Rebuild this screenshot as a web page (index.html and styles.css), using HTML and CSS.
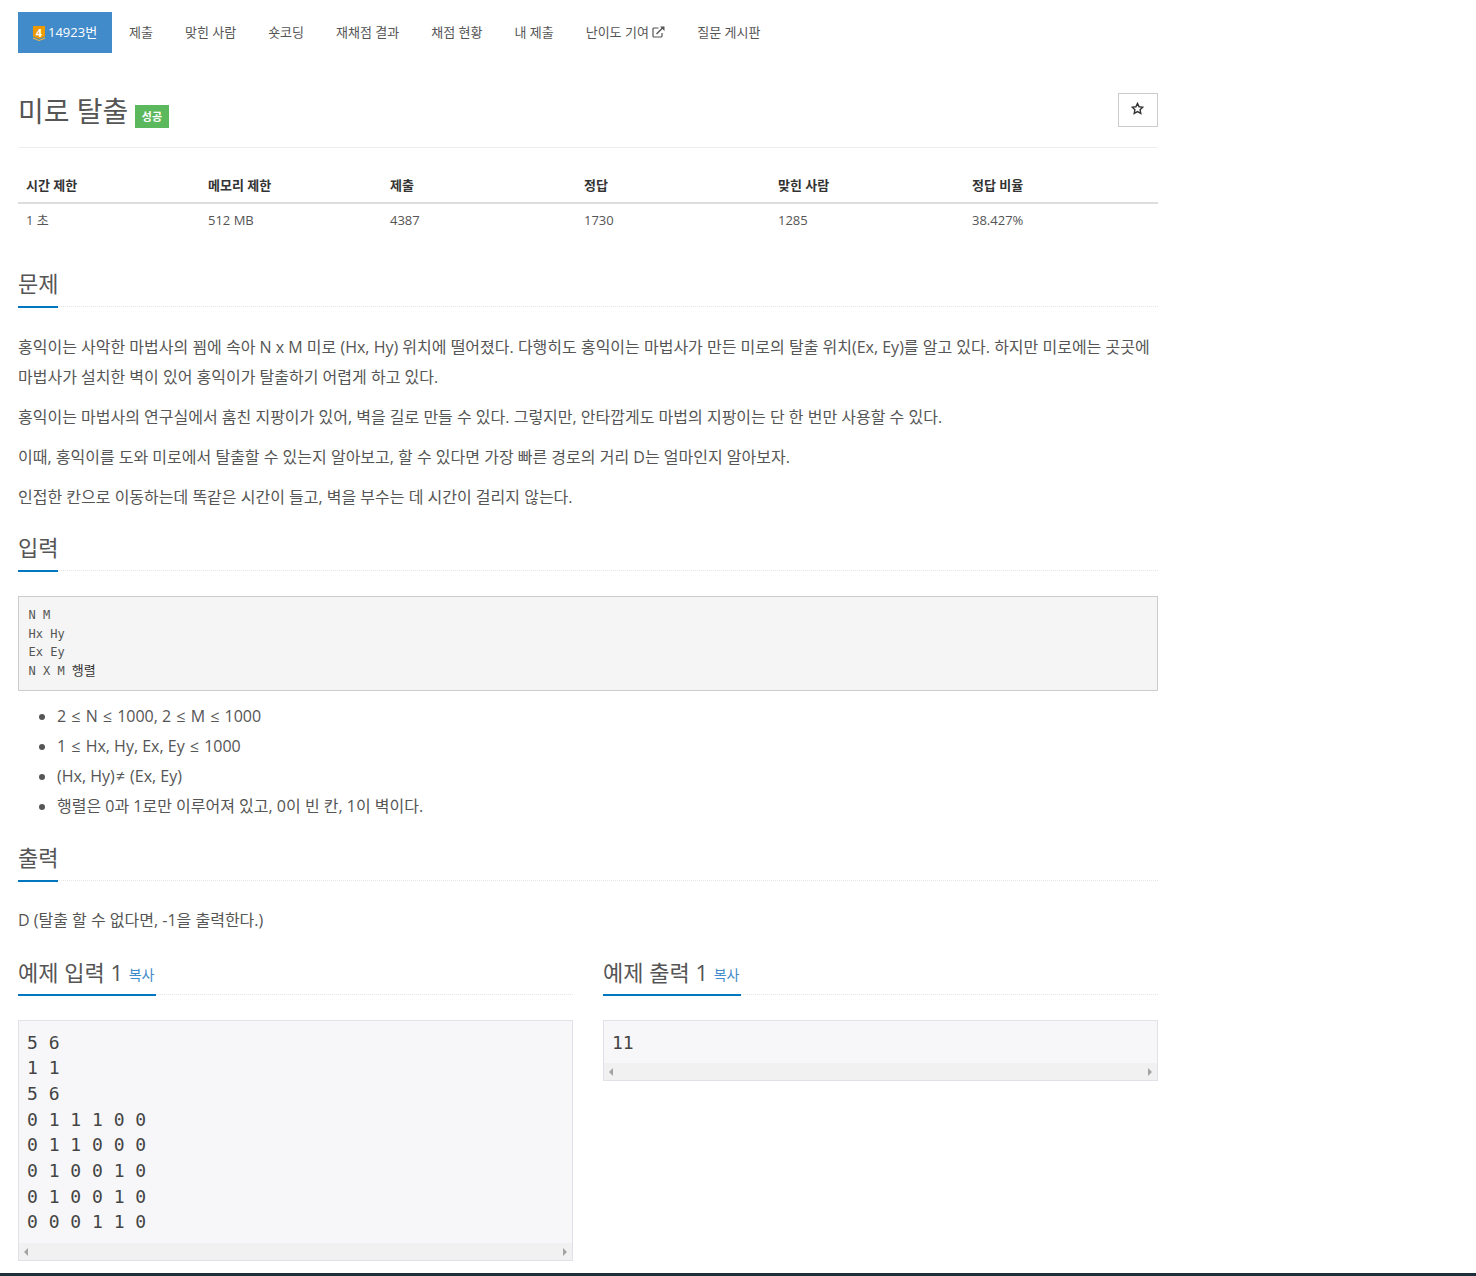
FILE: index.html
```html
<!DOCTYPE html>
<html lang="ko">
<head>
<meta charset="utf-8">
<title>미로 탈출</title>
<link rel="stylesheet" href="styles.css">
</head>
<body>
<div class="page">
  <ul class="tabs">
    <li class="tab active"><span class="tier"><svg width="12" height="15" viewBox="0 0 12 15"><path d="M0 0h12v10.500l-6 2.500-6-2.500z" fill="#ec9a00"/><path d="M0 11.500l6 2.500 6-2.500v1.200l-6 2.300-6-2.300z" fill="#f6b73c"/></svg><span class="tier-num">4</span></span><span>14923번</span></li>
    <li class="tab">제출</li>
    <li class="tab">맞힌 사람</li>
    <li class="tab">숏코딩</li>
    <li class="tab">재채점 결과</li>
    <li class="tab">채점 현황</li>
    <li class="tab">내 제출</li>
    <li class="tab">난이도 기여 <svg class="ext" width="13" height="12" viewBox="0 0 13 12"><path d="M10 7v3a1 1 0 0 1-1 1H2a1 1 0 0 1-1-1V3a1 1 0 0 1 1-1h4.500" fill="none" stroke="#555" stroke-width="1.200"/><path d="M4.500 8L11 1.500" stroke="#555" stroke-width="1.500"/><path d="M8 .5h4.500V5z" fill="#555"/></svg></li>
    <li class="tab">질문 게시판</li>
  </ul>

  <header class="title-row">
    <h1 class="title"><span>미로 탈출</span><span class="badge">성공</span></h1>
    <button class="star-btn" type="button"><svg width="13" height="13" viewBox="0 0 24 24"><path d="M12 2.500l2.900 6.300 6.900.8-5.100 4.700 1.400 6.800-6.100-3.400-6.100 3.400 1.400-6.800-5.100-4.700 6.900-.8z" fill="none" stroke="#333" stroke-width="2.500"/></svg></button>
  </header>

  <table class="info">
    <thead>
      <tr><th class="c1">시간 제한</th><th class="c2">메모리 제한</th><th class="c3">제출</th><th class="c4">정답</th><th class="c5">맞힌 사람</th><th>정답 비율</th></tr>
    </thead>
    <tbody>
      <tr><td>1 초</td><td>512 MB</td><td>4387</td><td>1730</td><td>1285</td><td>38.427%</td></tr>
    </tbody>
  </table>

  <section class="sec sec-first">
    <div class="head"><h2 class="h2">문제</h2></div>
    <div class="body">
      <p>홍익이는 사악한 마법사의 꾐에 속아 N x M 미로 (Hx, Hy) 위치에 떨어졌다. 다행히도 홍익이는 마법사가 만든 미로의 탈출 위치(Ex, Ey)를 알고 있다. 하지만 미로에는 곳곳에 마법사가 설치한 벽이 있어 홍익이가 탈출하기 어렵게 하고 있다.</p>
      <p>홍익이는 마법사의 연구실에서 훔친 지팡이가 있어, 벽을 길로 만들 수 있다. 그렇지만, 안타깝게도 마법의 지팡이는 단 한 번만 사용할 수 있다.</p>
      <p>이때, 홍익이를 도와 미로에서 탈출할 수 있는지 알아보고, 할 수 있다면 가장 빠른 경로의 거리 D는 얼마인지 알아보자.</p>
      <p>인접한 칸으로 이동하는데 똑같은 시간이 들고, 벽을 부수는 데 시간이 걸리지 않는다.</p>
    </div>
  </section>

  <section class="sec">
    <div class="head"><h2 class="h2">입력</h2></div>
    <div class="body">
      <pre class="format"><span class="code">N M
Hx Hy
Ex Ey
N X M </span>행렬</pre>
      <ul class="bullets">
        <li>2 <span class="op">≤</span> N <span class="op">≤</span> 1000, 2 <span class="op">≤</span> M <span class="op">≤</span> 1000</li>
        <li>1 <span class="op">≤</span> Hx, Hy, Ex, Ey <span class="op">≤</span> 1000</li>
        <li>(Hx, Hy)<span class="op">≠</span> (Ex, Ey)</li>
        <li>행렬은 0과 1로만 이루어져 있고, 0이 빈 칸, 1이 벽이다.</li>
      </ul>
    </div>
  </section>

  <section class="sec sec-out">
    <div class="head"><h2 class="h2">출력</h2></div>
    <div class="body"><p>D (탈출 할 수 없다면, -1을 출력한다.)</p></div>
  </section>

  <div class="samples">
    <section class="sample">
      <div class="head"><h2 class="h2 h2-sample">예제 입력 1 <a class="copy">복사</a></h2></div>
      <div class="sample-box">
        <pre class="sample-text">5 6
1 1
5 6
0 1 1 1 0 0
0 1 1 0 0 0
0 1 0 0 1 0
0 1 0 0 1 0
0 0 0 1 1 0</pre>
        <div class="hbar"><i class="arrow-l"></i><i class="arrow-r"></i></div>
      </div>
    </section>
    <section class="sample">
      <div class="head"><h2 class="h2 h2-sample">예제 출력 1 <a class="copy">복사</a></h2></div>
      <div class="sample-box">
        <pre class="sample-text">11</pre>
        <div class="hbar"><i class="arrow-l"></i><i class="arrow-r"></i></div>
      </div>
    </section>
  </div>
</div>
<footer class="footer"></footer>
</body>
</html>
```

FILE: styles.css
```css
* { box-sizing: border-box; }
html, body { margin: 0; padding: 0; height: 1276px; overflow: hidden; background: #fff; }
body {
  display: flex;
  flex-direction: column;
  font-family: "Open Sans", "Noto Sans CJK KR", sans-serif;
  font-size: 13px;
  line-height: 1.428;
  color: #555;
}
.page { flex: 1; min-height: 0; width: 1158px; padding: 12px 0 0 18px; }
.footer { height: 3px; background: #1c2f3a; flex: none; }

.tabs { display: flex; list-style: none; margin: 0; padding: 0; height: 41px; }
.tab { padding: 0 16px; white-space: nowrap; line-height: 41px; }
.tab.active { display: flex; align-items: center; gap: 3px; background: #428bca; color: #fff; padding: 0 15px; margin-right: 1px; font-weight: 400; width: 94px; height: 41px; }
.tier { position: relative; flex: none; width: 12px; height: 15px; margin-top: 1px; }
.tier svg { display: block; }
.tier-num { position: absolute; left: 0; top: 0; width: 12px; height: 13px; font-size: 11px; font-weight: 700; line-height: 13px; text-align: center; color: #fff; }
.ext { vertical-align: -1px; }

.title-row { display: flex; justify-content: space-between; align-items: flex-start; margin-top: 40px; height: 55px; border-bottom: 1px solid #eee; }
.title { display: flex; align-items: flex-end; margin: 0; font-size: 28px; font-weight: 400; line-height: 36px; }
.badge { background: #5cb85c; color: #fff; font-size: 11px; font-weight: 700; line-height: 23px; height: 23px; padding: 0 6.500px; margin: 0 0 1px 7px; }
.star-btn { width: 40px; height: 34px; background: #fff; border: 1px solid #ccc; padding: 0 2px 3px 0; display: flex; align-items: center; justify-content: center; }

.info { width: 1140px; border-collapse: collapse; margin-top: 19px; table-layout: fixed; }
.info th { text-align: left; font-weight: 700; padding: 9px 8px 7px; height: 35px; border-bottom: 2px solid #ddd; color: #333; }
.info td { padding: 7px 8px; line-height: 19px; color: #555; }
.c1, .c2 { width: 182px; }
.c3, .c4, .c5 { width: 194px; }

.sec { margin-top: 20px; }
.sec-first { margin-top: 31px; }
.sec-out { margin-top: 21px; }
.head { display: flex; border-bottom: 1px dotted #e5e5e5; height: 39px; margin-bottom: 1px; }
.h2 { flex: none; margin: 0; height: 40px; font-size: 22px; font-weight: 400; line-height: 30px; border-bottom: 2px solid #0076c0; white-space: nowrap; }
.h2-sample { line-height: 32px; }
.copy { font-size: 14px; color: #428bca; padding-right: 2px; vertical-align: 1px; }

.body { font-size: 16px; line-height: 30px; }
.sec-first .body { padding-top: 24px; }
.body p { margin: 0 0 10px; }
.sec-out .body { padding-top: 23px; }

.format { margin: 25px 0 10px; height: 95px; padding: 9.700px 9.500px 9.500px; background: #f5f5f5; border: 1px solid #ccc; font-family: "DejaVu Sans Mono", "Noto Sans CJK KR", monospace; font-size: 13px; line-height: 18.570px; color: #333; }
.code { font-size: 12px; color: #555; }
.bullets { margin: 0 0 10px; padding: 0 0 0 39px; }
.bullets li { line-height: 30px; }
.op { padding: 0 1px; }

.samples { display: grid; grid-template-columns: 555px 555px; column-gap: 30px; margin-top: 21px; }
.sample-box { margin-top: 25px; background: #f7f7f9; border: 1px solid #e1e1e8; }
.sample-text { margin: 0; padding: 9px 8px 8px; font-family: "DejaVu Sans Mono", monospace; font-size: 18px; line-height: 25.700px; color: #444; }
.hbar { display: flex; justify-content: space-between; align-items: center; height: 17px; background: #f1f1f1; padding: 0 5px; }
.arrow-l { border: 4px solid transparent; border-left: 0; border-right: 4px solid #a3a3a3; }
.arrow-r { border: 4px solid transparent; border-right: 0; border-left: 4px solid #a3a3a3; }
```
